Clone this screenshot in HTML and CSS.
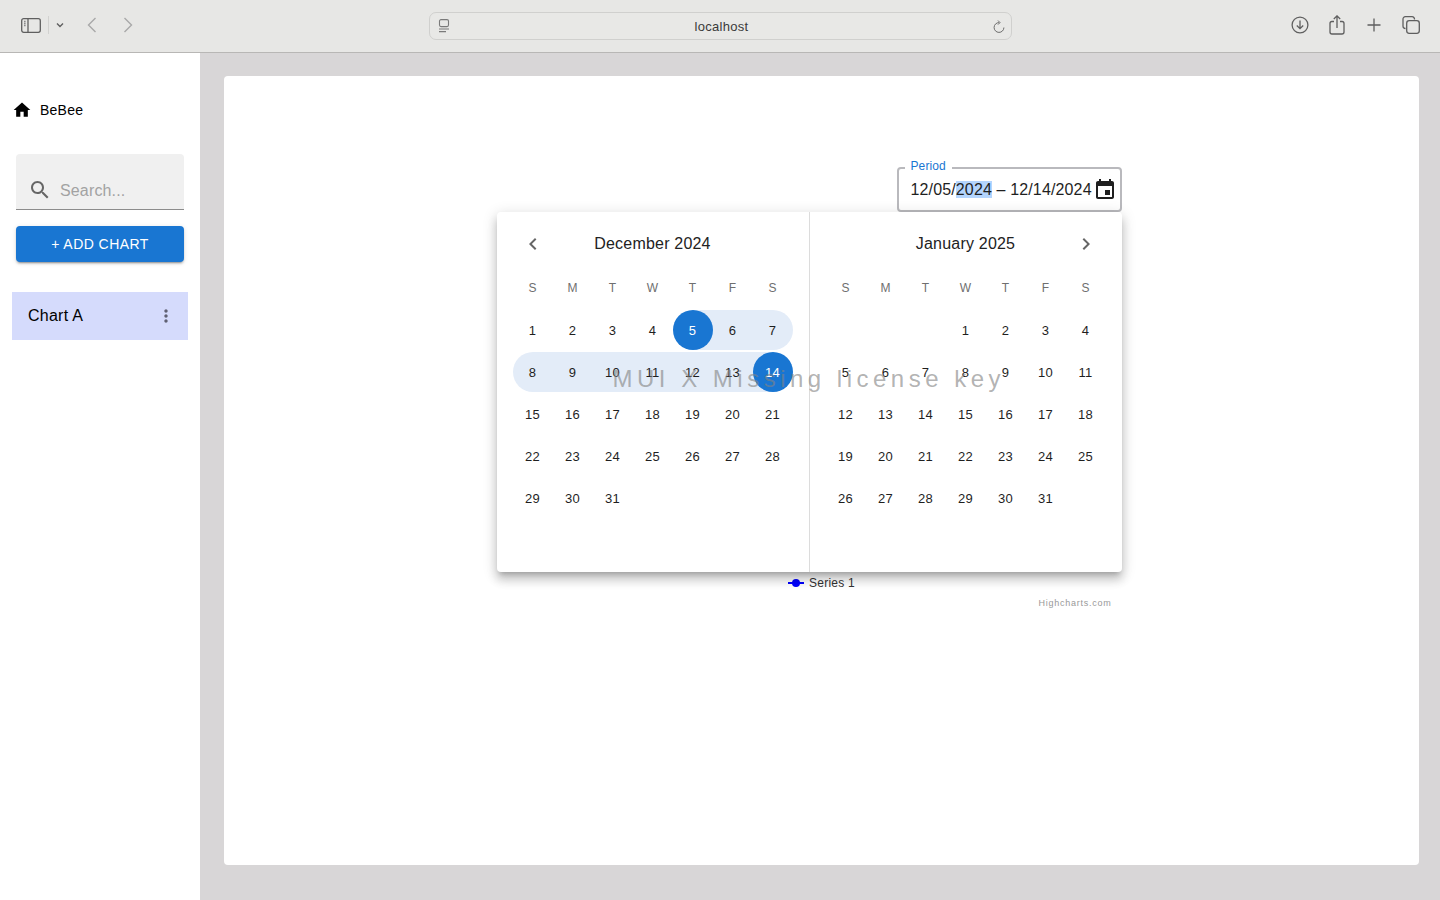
FILE: index.html
```html
<!DOCTYPE html>
<html>
<head>
    <meta charset="utf-8">
    <title>BeBee</title>
    <link rel="stylesheet" href="styles.css">
</head>

<body>
    <header class="toolbar">
        <div class="toolbar-left">
            <svg class="tb-sidebar" width="20" height="15" viewBox="0 0 20 15" fill="none" stroke="#5f5f5f" stroke-width="1.3">
                <rect x="0.7" y="0.7" width="18.6" height="13.6" rx="2"/>
                <path d="M7 .7v13.6"/>
                <path d="M3 3.5h1.6M3 5.5h1.6M3 7.5h1.6" stroke="#8a8a8a"/>
            </svg>
            <span class="tb-divider"></span>
            <svg class="tb-caret" width="8" height="6" viewBox="0 0 8 6" fill="none" stroke="#5f5f5f" stroke-width="1.4">
                <path d="M1 1.5l3 3 3-3"/>
            </svg>
            <svg class="tb-back" width="10" height="16" viewBox="0 0 10 16" fill="none" stroke="#a9a9a9" stroke-width="1.4">
                <path d="M8.5 1L1.5 8l7 7"/>
            </svg>
            <svg class="tb-forward" width="10" height="16" viewBox="0 0 10 16" fill="none" stroke="#a9a9a9" stroke-width="1.4">
                <path d="M1.5 1l7 7-7 7"/>
            </svg>
        </div>
        <div class="address">
            <svg width="12" height="14" viewBox="0 0 12 14" fill="none" stroke="#7a7a7a" stroke-width="1.1">
                <rect x="1.5" y="0.6" width="9" height="7" rx="1.5"/>
                <path d="M1 10h10M1 12.6h7"/>
            </svg>
            <span class="address-text">localhost</span>
            <svg class="reload" width="12" height="14" viewBox="0 0 12 14" fill="none" stroke="#6c6c6c" stroke-width="1">
                <path d="M6.2 2.6A4.9 4.9 0 1 0 10.9 7.5"/>
                <path d="M5 .5l2 2.1-2 2" />
            </svg>
        </div>
        <div class="toolbar-right">
            <svg width="18" height="18" viewBox="0 0 18 18" fill="none" stroke="#5f5f5f" stroke-width="1.3">
                <circle cx="9" cy="9" r="7.9"/>
                <path d="M9 4.5v8M5.8 9.5L9 12.7l3.2-3.2"/>
            </svg>
            <svg width="16" height="20" viewBox="0 0 16 20" fill="none" stroke="#5f5f5f" stroke-width="1.3">
                <path d="M5 6.500H3a2 2 0 0 0-2 2V17a2 2 0 0 0 2 2h10a2 2 0 0 0 2-2V8.500a2 2 0 0 0-2-2h-2"/>
                <path d="M8 13V1M4.800 4L8 .9 11.200 4"/>
            </svg>
            <svg class="tb-plus" width="14" height="14" viewBox="0 0 14 14" fill="none" stroke="#5f5f5f" stroke-width="1.3">
                <path d="M7 .5v13M.5 7h13"/>
            </svg>
            <svg class="tb-tabs" width="18" height="18" viewBox="0 0 18 18" fill="none" stroke="#5f5f5f" stroke-width="1.3">
                <path d="M3.500 12.500A2.500 2.500 0 0 1 1 10V3a2.300 2.300 0 0 1 2.300-2.300H10A2.500 2.500 0 0 1 12.500 3.500"/>
                <rect x="4.700" y="4.700" width="12.600" height="12.600" rx="2.500"/>
            </svg>
        </div>
    </header>

    <div class="app">
        <aside class="sidebar">
            <div class="brand">
                <svg width="20" height="20" viewBox="0 0 24 24"><path d="M10 20v-6h4v6h5v-8h3L12 3 2 12h3v8z"/></svg>
                <span>BeBee</span>
            </div>
            <div class="search">
                <svg width="24" height="24" viewBox="0 0 24 24" fill="#666"><path d="M15.500 14h-.79l-.28-.27C15.410 12.590 16 11.110 16 9.500 16 5.910 13.090 3 9.500 3S3 5.910 3 9.500 5.910 16 9.500 16c1.610 0 3.090-.59 4.230-1.570l.27.28v.79l5 4.990L20.490 19l-4.990-5zm-6 0C7.010 14 5 11.990 5 9.500S7.010 5 9.500 5 14 7.010 14 9.500 11.990 14 9.500 14z"/></svg>
                <input class="search-input" placeholder="Search...">
            </div>
            <button class="add-button">+ ADD CHART</button>
            <div class="chart-item">
                <span>Chart A</span>
                <svg width="20" height="20" viewBox="0 0 24 24" fill="#5f6072"><path d="M12 8c1.100 0 2-.9 2-2s-.9-2-2-2-2 .9-2 2 .9 2 2 2zm0 2c-1.100 0-2 .9-2 2s.9 2 2 2 2-.9 2-2-.9-2-2-2zm0 6c-1.100 0-2 .9-2 2s.9 2 2 2 2-.9 2-2-.9-2-2-2z"/></svg>
            </div>
        </aside>

        <main class="content">
            <section class="card">
                <div class="chart">
                    <div class="period">
                        <span class="period-label">Period</span>
                        <span class="period-value">12/05/<span class="selected">2024</span> – 12/14/2024</span>
                        <svg width="24" height="24" viewBox="0 0 24 24" fill="#1f1f1f"><path d="M17 12h-5v5h5v-5zM16 1v2H8V1H6v2H5c-1.110 0-1.990.9-1.990 2L3 19c0 1.100.89 2 2 2h14c1.100 0 2-.9 2-2V5c0-1.100-.9-2-2-2h-1V1h-2zm3 18H5V8h14v11z"/></svg>
                    </div>

                    <div class="popover">
                        <div class="month">
                            <div class="month-head">
                                <svg width="24" height="24" viewBox="0 0 24 24" fill="#666"><path d="M15.410 7.410 14 6l-6 6 6 6 1.410-1.410L10.830 12z"/></svg>
                                <span class="month-title">December 2024</span>
                                <span class="arrow-space"></span>
                            </div>
                            <div class="days">
                                <span class="dow">S</span><span class="dow">M</span><span class="dow">T</span><span class="dow">W</span><span class="dow">T</span><span class="dow">F</span><span class="dow">S</span>
                                <span class="day">1</span><span class="day">2</span><span class="day">3</span><span class="day">4</span>
                                <span class="day range-start"><b>5</b></span>
                                <span class="day range">6</span>
                                <span class="day range row-end">7</span>
                                <span class="day range row-start">8</span>
                                <span class="day range">9</span><span class="day range">10</span><span class="day range">11</span><span class="day range">12</span><span class="day range">13</span>
                                <span class="day range-end"><b>14</b></span>
                                <span class="day">15</span><span class="day">16</span><span class="day">17</span><span class="day">18</span><span class="day">19</span><span class="day">20</span><span class="day">21</span>
                                <span class="day">22</span><span class="day">23</span><span class="day">24</span><span class="day">25</span><span class="day">26</span><span class="day">27</span><span class="day">28</span>
                                <span class="day">29</span><span class="day">30</span><span class="day">31</span>
                            </div>
                        </div>
                        <div class="month month-second">
                            <div class="month-head">
                                <span class="arrow-space"></span>
                                <span class="month-title">January 2025</span>
                                <svg width="24" height="24" viewBox="0 0 24 24" fill="#666"><path d="M10 6 8.590 7.410 13.170 12l-4.580 4.590L10 18l6-6z"/></svg>
                            </div>
                            <div class="days">
                                <span class="dow">S</span><span class="dow">M</span><span class="dow">T</span><span class="dow">W</span><span class="dow">T</span><span class="dow">F</span><span class="dow">S</span>
                                <span class="day"></span><span class="day"></span><span class="day"></span>
                                <span class="day">1</span><span class="day">2</span><span class="day">3</span><span class="day">4</span>
                                <span class="day">5</span><span class="day">6</span><span class="day">7</span><span class="day">8</span><span class="day">9</span><span class="day">10</span><span class="day">11</span>
                                <span class="day">12</span><span class="day">13</span><span class="day">14</span><span class="day">15</span><span class="day">16</span><span class="day">17</span><span class="day">18</span>
                                <span class="day">19</span><span class="day">20</span><span class="day">21</span><span class="day">22</span><span class="day">23</span><span class="day">24</span><span class="day">25</span>
                                <span class="day">26</span><span class="day">27</span><span class="day">28</span><span class="day">29</span><span class="day">30</span><span class="day">31</span>
                            </div>
                        </div>
                        <div class="watermark">MUI X Missing license key</div>
                    </div>

                    <div class="legend">
                        <svg width="16" height="8" viewBox="0 0 16 8"><path d="M0 4h16" stroke="#0000ff" stroke-width="2"/><circle cx="8" cy="4" r="4" fill="#0000ff"/></svg>
                        <span>Series 1</span>
                    </div>
                    <div class="credits">Highcharts.com</div>
                </div>
            </section>
        </main>
    </div>
</body>
</html>
```

FILE: styles.css
```css
* {
    box-sizing: border-box;
}

body {
    margin: 0;
    height: 900px;
    overflow: hidden;
    background-color: #d8d6d7;
    font-family: "Liberation Sans", Arial, sans-serif;
    color: #000;
}

/* browser chrome */
.toolbar {
    height: 53px;
    display: grid;
    grid-template-columns: 429px 583px 1fr;
    align-items: center;
    background-color: #e7e7e5;
    border-bottom: 1px solid #b8b7b5;
}

.toolbar svg {
    display: block;
    flex: none;
}

.toolbar-left {
    display: flex;
    align-items: center;
    padding-left: 21px;
    padding-bottom: 2px;
}

.tb-divider {
    width: 1px;
    height: 18px;
    margin: 0 7px 0 7px;
    background-color: #d2d2d0;
}

.tb-back {
    margin-left: 23px;
}

.tb-forward {
    margin-left: 26px;
}

.address {
    height: 28px;
    display: flex;
    align-items: center;
    justify-content: space-between;
    padding: 0 6px 0 8px;
    border: 1px solid #d0d0ce;
    border-radius: 7px;
    background-color: #e8e8e6;
}

.address-text {
    font-size: 13px;
    letter-spacing: 0.3px;
    color: #3a3a3a;
}

.reload {
    margin-top: 1px;
}

.toolbar-right {
    display: flex;
    align-items: center;
    padding-left: 279px;
    padding-bottom: 2px;
    gap: 20px;
}

.tb-plus {
    margin-left: 2px;
}

.tb-tabs {
    margin-left: 1px;
}

/* app */
.app {
    display: flex;
    height: 847px;
}

.sidebar {
    width: 200px;
    flex: none;
    background-color: #fff;
    padding: 0 12px;
}

.brand {
    height: 20px;
    margin-top: 47px;
    display: flex;
    align-items: center;
    gap: 8px;
    font-size: 14px;
    letter-spacing: 0.25px;
}

.brand svg {
    display: block;
}

.search {
    height: 56px;
    margin: 34px 4px 0;
    padding: 16px 0 0 12px;
    display: flex;
    align-items: center;
    gap: 8px;
    background-color: #f0f0f0;
    border-bottom: 1px solid #8c8c8c;
    border-radius: 4px 4px 0 0;
}

.search svg {
    flex: none;
}

.search-input {
    width: 110px;
    margin-top: 2px;
    border: 0;
    padding: 0;
    outline: none;
    background: transparent;
    font-family: inherit;
    font-size: 16px;
    letter-spacing: 0.15px;
}

.search-input::placeholder {
    color: #a2a2a2;
    opacity: 1;
}

.add-button {
    display: block;
    width: 168px;
    height: 36px;
    margin: 16px 4px 0;
    border: 0;
    border-radius: 4px;
    background-color: #1976d2;
    color: #fff;
    font-family: inherit;
    font-size: 14px;
    letter-spacing: 0.45px;
    box-shadow: 0 3px 1px -2px rgba(0, 0, 0, .2), 0 2px 2px 0 rgba(0, 0, 0, .14), 0 1px 5px 0 rgba(0, 0, 0, .12);
}

.chart-item {
    height: 48px;
    margin-top: 30px;
    padding: 0 12px 0 16px;
    display: flex;
    align-items: center;
    justify-content: space-between;
    background-color: #d5dbfc;
    font-size: 16px;
    letter-spacing: 0.25px;
}

.content {
    flex: 1;
    padding: 23px 21px 35px 24px;
}

.card {
    height: 789px;
    padding-top: 91px;
    background-color: #fff;
    border-radius: 4px;
}

.chart {
    position: relative;
    width: 600px;
    margin: 0 auto;
    padding-top: 408px;
}

/* date range field */
.period {
    position: absolute;
    top: 0;
    right: 0;
    width: 225px;
    height: 45px;
    display: flex;
    align-items: center;
    justify-content: space-between;
    padding: 0 3px 0 12px;
    border: 2px solid #b9b9bd;
    border-radius: 4px;
    background-color: #fff;
}

.period-label {
    position: absolute;
    top: -10px;
    left: 6px;
    padding: 0 6px;
    background-color: #fff;
    color: #1976d2;
    font-size: 12px;
    line-height: 14px;
    letter-spacing: 0.1px;
}

.period-value {
    font-size: 16px;
    letter-spacing: 0.14px;
    color: #1f1f1f;
    white-space: nowrap;
}

.selected {
    background-color: #b4d5fe;
}

/* calendar popup */
.popover {
    position: absolute;
    top: 45px;
    right: 0;
    width: 625px;
    height: 360px;
    display: flex;
    background-color: #fff;
    border-radius: 4px;
    box-shadow: 0 5px 5px -3px rgba(0, 0, 0, .2), 0 8px 10px 1px rgba(0, 0, 0, .14), 0 3px 14px 2px rgba(0, 0, 0, .12);
}

.month {
    width: 312px;
    padding: 16px;
}

.month-second {
    width: 313px;
    border-left: 1px solid #dcdcdc;
}

.month-head {
    height: 32px;
    margin-bottom: 8px;
    display: flex;
    align-items: center;
    justify-content: space-between;
    padding: 0 8px;
}

.month-title {
    font-size: 16px;
    letter-spacing: 0.2px;
    color: #222;
    margin-top: -1px;
}

.arrow-space {
    width: 24px;
}

.days {
    display: grid;
    grid-template-columns: repeat(7, 40px);
    grid-auto-rows: 40px;
    row-gap: 2px;
}

.dow {
    display: flex;
    align-items: center;
    justify-content: center;
    font-size: 12px;
    color: #6f6f6f;
}

.day {
    display: flex;
    align-items: center;
    justify-content: center;
    font-size: 13px;
    letter-spacing: 0.2px;
    color: #1f1f1f;
}

.range {
    background-color: #e3ecf8;
}

.row-start {
    border-radius: 20px 0 0 20px;
}

.row-end {
    border-radius: 0 20px 20px 0;
}

.range-start {
    background: linear-gradient(to right, transparent 50%, #e3ecf8 50%);
}

.range-end {
    background: linear-gradient(to right, #e3ecf8 50%, transparent 50%);
}

.day b {
    width: 40px;
    height: 40px;
    display: flex;
    align-items: center;
    justify-content: center;
    border-radius: 50%;
    background-color: #1976d2;
    color: #fff;
    font-weight: normal;
}

.watermark {
    position: absolute;
    left: 116px;
    top: 153px;
    color: rgba(130, 130, 130, .62);
    font-size: 24px;
    letter-spacing: 4.5px;
    white-space: nowrap;
    pointer-events: none;
}

/* what is left of the chart */
.legend {
    display: flex;
    align-items: center;
    justify-content: center;
    gap: 5px;
    height: 16px;
    font-size: 12px;
    letter-spacing: 0.25px;
    color: #333;
}

.legend svg {
    display: block;
}

.credits {
    margin-top: 7px;
    padding-right: 10px;
    text-align: right;
    font-size: 9px;
    letter-spacing: 0.75px;
    color: #999;
}
```
